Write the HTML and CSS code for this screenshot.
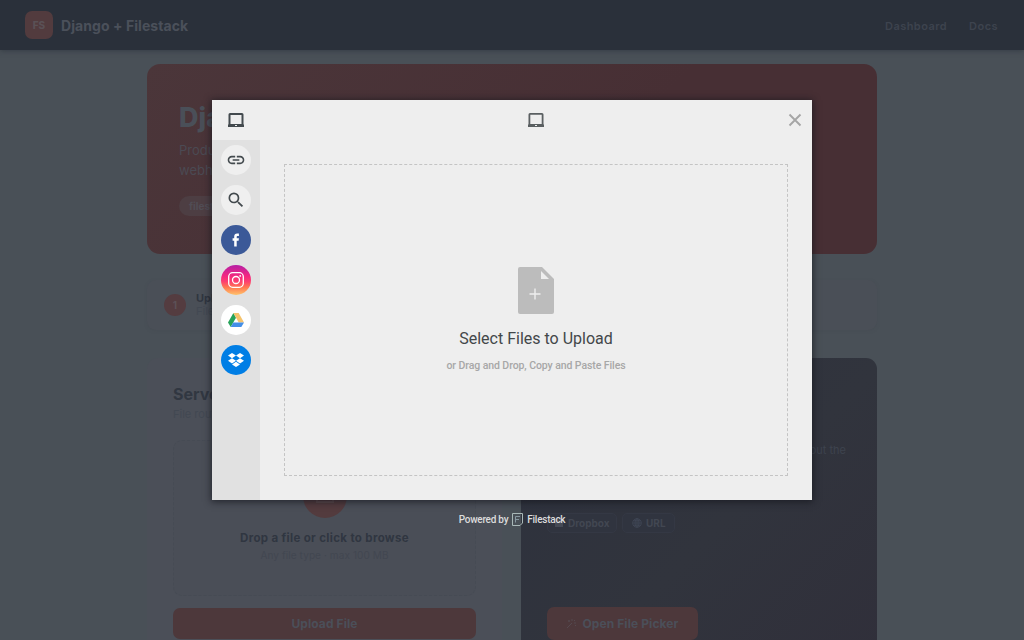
FILE: index.html
```
<!DOCTYPE html>
<html lang="en">
<head>
    <meta charset="UTF-8">
    <meta name="viewport" content="width=device-width, initial-scale=1.0">
    <title>Django + Filestack</title>
    <link rel="stylesheet" href="styles.css">
</head>
<body>
    <div class="navbar">
        <div class="brand"><span class="logo">FS</span><span class="brand-name">Django + Filestack</span></div>
        <div class="nav-links"><a>Dashboard</a><a>Docs</a></div>
    </div>

    <div class="page">
        <div class="hero">
            <h1>Django</h1>
            <p>Production<br>webhooks</p>
            <span class="tag">filestack</span>
        </div>

        <div class="steps">
            <span class="step-num">1</span>
            <div class="step-text"><b>Upload</b><span>File</span></div>
        </div>

        <div class="cards">
            <div class="card">
                <h2>Server</h2>
                <p class="sub">File routed</p>
                <div class="drop">
                    <div class="drop-icon">
                        <svg width="20" height="20" viewBox="0 0 20 20"><path d="M10 13V4M6 8l4-4 4 4M2 12v4h16v-4" fill="none" stroke="#5d494c" stroke-width="2"/></svg>
                    </div>
                    <b>Drop a file or click to browse</b>
                    <span>Any file type · max 100 MB</span>
                </div>
                <div class="btn upload-btn">Upload File</div>
            </div>

            <div class="card dark">
                <p class="dark-text">about the</p>
                <div class="chips">
                    <span class="chip chip-dropbox"><svg width="10" height="10" viewBox="0 0 10 10"><path d="M1 1h3l1 1h4v7H1z" fill="#454a55"/></svg><span>Dropbox</span></span>
                    <span class="chip chip-url"><svg width="10" height="10" viewBox="0 0 10 10" fill="none" stroke="#434b5a" stroke-width=".7"><circle cx="5" cy="5" r="4.300"/><ellipse cx="5" cy="5" rx="2" ry="4.300"/><path d="M.7 5h8.600M1.300 2.800h7.400M1.300 7.200h7.400M5 .7v8.600"/></svg><span>URL</span></span>
                </div>
                <div class="btn picker-btn">
                    <svg width="11" height="11" viewBox="0 0 11 11"><path d="M1 10l5-5M6 1v2M9 2L8 3M10 5H8M9 7l1 1M2 3h2M3 2v2" fill="none" stroke="#55494f" stroke-width="1"/></svg>
                    <span>Open File Picker</span>
                </div>
            </div>
        </div>
    </div>

    <!-- File picker -->
    <div class="overlay">
        <div class="modal">
            <div class="sidebar">
                <div class="source active">
                    <svg width="16" height="14" viewBox="0 0 16 14"><path fill="#434a4e" fill-rule="evenodd" d="M.5 11.500V1.500Q.5 0 2 0h12q1.500 0 1.500 1.500v10h.5V14H0v-2.500zM2.500 2v9h11V2zM7 12v1h2v-1z"/></svg>
                </div>
                <div class="source"><span class="round">
                    <svg width="20" height="20" viewBox="0 0 24 24"><path fill="#434a4e" d="M3.900 12c0-1.710 1.390-3.100 3.100-3.100h4V7H7c-2.760 0-5 2.240-5 5s2.240 5 5 5h4v-1.900H7c-1.710 0-3.100-1.390-3.100-3.100zM8 13h8v-2H8v2zm9-6h-4v1.900h4c1.710 0 3.100 1.390 3.100 3.100s-1.390 3.100-3.100 3.100h-4V17h4c2.760 0 5-2.240 5-5s-2.240-5-5-5z"/></svg>
                </span></div>
                <div class="source"><span class="round">
                    <svg width="20" height="20" viewBox="0 0 24 24"><path fill="#434a4e" d="M15.500 14h-.79l-.28-.27A6.470 6.470 0 0 0 16 9.500 6.500 6.500 0 1 0 9.500 16c1.610 0 3.090-.59 4.230-1.570l.27.28v.79l5 4.990L20.490 19zm-6 0C7.010 14 5 11.990 5 9.500S7.010 5 9.500 5 14 7.010 14 9.500 11.990 14 9.500 14z"/></svg>
                </span></div>
                <div class="source"><span class="round facebook">
                    <svg width="8" height="14" viewBox="0 0 8 14"><path fill="#fff" d="M2.200 13.500V7.700H.6V5.300h1.600V3.600C2.200 1.600 3.200.6 5.200.6h1.700v2.300H5.700c-.8 0-1 .3-1 1v1.400h2.200l-.3 2.400H4.700v5.800z"/></svg>
                </span></div>
                <div class="source"><span class="round instagram">
                    <svg width="16" height="16" viewBox="0 0 16 16" fill="none" stroke="#fff" stroke-width="1.300"><rect x=".7" y=".7" width="14.600" height="14.600" rx="4"/><circle cx="8" cy="8" r="3.500"/><circle cx="12.200" cy="3.900" r=".9" fill="#fff" stroke="none"/></svg>
                </span></div>
                <div class="source"><span class="round drive">
                    <svg width="16" height="14" viewBox="0 0 16 14"><path fill="#27a35a" d="M5.400 0L0 9.400 2.700 14 8 4.700z"/><path fill="#f5c36c" d="M5.400 0h5.300L16 9.400h-5.300z"/><path fill="#448fe8" d="M5.300 9.400H16L13.300 14H2.700z"/></svg>
                </span></div>
                <div class="source"><span class="round dropbox">
                    <svg width="16" height="15" viewBox="0 0 16 15"><path fill="#fff" d="M4 0l4 2.600-4 2.600L0 2.600zM12 0l4 2.600-4 2.600-4-2.600zM4 5.200l4 2.600-4 2.600-4-2.600zM12 5.200l4 2.600-4 2.600-4-2.600zM4 11.400l4-2.600 4 2.600L8 14z"/></svg>
                </span></div>
            </div>

            <div class="content">
                <div class="modal-head">
                    <svg width="16" height="14" viewBox="0 0 16 14"><path fill="#5a5f61" fill-rule="evenodd" d="M.5 11.500V1.500Q.5 0 2 0h12q1.500 0 1.500 1.500v10h.5V14H0v-2.500zM2.300 1.700V11h11.400V1.700zM7 12v1h2v-1z"/></svg>
                    <svg class="close" width="14" height="14" viewBox="0 0 14 14"><path d="M1.500 1.500l11 11m0-11l-11 11" stroke="#a5a5a5" stroke-width="1.900"/></svg>
                </div>
                <div class="select-zone">
                    <svg width="36" height="47" viewBox="0 0 36 47"><path fill="#bcbcbc" d="M2 0h22l12 12v33q0 2-2 2H2q-2 0-2-2V2q0-2 2-2z"/><path fill="#eee" d="M23 4v8h8z"/><path d="M11.500 27h11M17 21.500v11" stroke="#eee" stroke-width="1.400"/></svg>
                    <div class="select-title">Select Files to Upload</div>
                    <div class="select-sub">or Drag and Drop, Copy and Paste Files</div>
                </div>
            </div>
        </div>
        <div class="powered">
            <span>Powered by</span>
            <svg width="11" height="13" viewBox="0 0 11 13" fill="none" stroke="#a9b8b8"><path d="M8 12.500H.5V.5h10V10"/><path d="M3.500 9.500v-6H8M3.500 6.500H7" stroke="#8797a0"/><path d="M8 12.500L10.500 10"/></svg>
            <span>Filestack</span>
        </div>
    </div>
</body>
</html>
```
FILE: styles.css
```
* { box-sizing: border-box; }

body {
    margin: 0;
    height: 640px;
    overflow: hidden;
    background: #495057;
    font-family: Inter, "Open Sans", sans-serif;
}

h1, h2, p { margin: 0; }
svg { display: block; flex: none; }

.navbar {
    height: 50px;
    padding: 0 26px 0 25px;
    display: flex;
    justify-content: space-between;
    align-items: center;
    background: #2a303a;
    box-shadow: 0 1px 5px rgba(42,48,58,0.6);
}

.brand { display: flex; align-items: center; gap: 8px; }
.brand-name { color: #4b505a; font-size: 14px; font-weight: 700; letter-spacing: 0.07px; }

.logo {
    width: 28px;
    height: 28px;
    border-radius: 7px;
    background: #523b3e;
    color: #5a5156;
    font-size: 10px;
    font-weight: 800;
    line-height: 28px;
    text-align: center;
}

.nav-links {
    display: flex;
    gap: 22px;
    padding-top: 1px;
    color: #3d434e;
    font-size: 11px;
    font-weight: 600;
    letter-spacing: 0.45px;
}

.page { width: 730px; margin: 14px auto 0; }

.hero {
    height: 190px;
    padding: 37px 32px;
    border-radius: 13px;
    background: linear-gradient(135deg, #4b363a, #472f34 60%);
    color: #4b4a53;
}
.hero h1 { font-size: 27px; font-weight: 800; line-height: 34px; color: #4a4f58; }
.hero p { margin-top: 5px; font-size: 13px; line-height: 20px; }

.tag {
    display: inline-block;
    height: 20px;
    margin-top: 16px;
    padding: 0 10px;
    border-radius: 10px;
    background: #4d3e43;
    color: #514d55;
    font-size: 10px;
    font-weight: 700;
    line-height: 20px;
}

.steps {
    height: 50px;
    margin-top: 26px;
    padding: 0 17px;
    display: flex;
    align-items: center;
    gap: 10px;
    border-radius: 9px;
    background: #4a4f57;
    box-shadow: 0 1px 3px rgba(70,75,84,0.6);
}
.step-num {
    width: 22px;
    height: 22px;
    border-radius: 50%;
    background: #543c40;
    color: #5c5157;
    font-size: 10px;
    font-weight: 700;
    line-height: 22px;
    text-align: center;
}
.step-text { display: flex; flex-direction: column; font-size: 11px; line-height: 13px; color: #424852; }
.step-text b { color: #303640; }

.cards { display: flex; gap: 19px; margin-top: 28px; }

.card {
    width: 355px;
    height: 310px;
    padding: 26px;
    border-radius: 11px;
    background: #4b4f58;
}
.card h2 { font-size: 16px; font-weight: 700; line-height: 20px; color: #313741; }
.sub { margin-top: 1px; font-size: 11px; line-height: 18px; color: #424852; }

.drop {
    height: 156px;
    margin-top: 17px;
    padding-top: 33px;
    display: flex;
    flex-direction: column;
    align-items: center;
    border: 1px dashed #464b54;
    border-radius: 9px;
    background: #4a4e57;
    color: #424751;
    font-size: 10px;
}
.drop b { margin-top: 13px; color: #303641; font-size: 11.5px; line-height: 15px; letter-spacing: 0.34px; }
.drop span { line-height: 19px; letter-spacing: 0.1px; }
.drop-icon {
    width: 44px;
    height: 44px;
    display: flex;
    justify-content: center;
    align-items: center;
    border-radius: 50%;
    background: #533b3e;
}

.btn {
    display: flex;
    justify-content: center;
    align-items: center;
    border-radius: 7px;
    background: #4d383b;
    color: #4b4f59;
    font-size: 12px;
    font-weight: 700;
    letter-spacing: 0.1px;
}
.upload-btn { height: 31px; margin-top: 12px; }

.card.dark { width: 356px; background: linear-gradient(135deg, #2d313d, #31343d 55%, #302f3a); }
.dark-text { margin: 57px 5px 0 0; text-align: right; color: #3e434e; font-size: 11px; line-height: 18px; }

.chips { display: flex; gap: 5px; margin-top: 54px; }
.chip {
    height: 20px;
    display: flex;
    align-items: center;
    gap: 5px;
    border: 1px solid #343844;
    border-radius: 5px;
    background: #30343f;
    color: #424752;
    font-size: 10px;
    font-weight: 700;
}
.chip-dropbox { width: 70px; padding-left: 6px; gap: 4px; }
.chip-url { width: 53px; padding-left: 9px; gap: 4px; }

.picker-btn { width: 151px; height: 33px; margin-top: 74px; gap: 5px; }

/* Picker sits over the dimmed page */
.overlay {
    position: absolute;
    top: 0;
    left: 0;
    width: 1024px;
    height: 640px;
    padding-top: 100px;
    font-family: Roboto, sans-serif;
}

.modal {
    width: 600px;
    height: 400px;
    margin: 0 auto;
    display: flex;
    background: #eee;
    box-shadow: 0 1px 7px 1px rgba(20,22,28,0.7);
}

.sidebar { width: 48px; background: #e1e1e1; }
.source { height: 40px; display: flex; justify-content: center; align-items: center; }
.source.active { background: #eee; }

.round {
    width: 30px;
    height: 30px;
    display: flex;
    justify-content: center;
    align-items: center;
    border-radius: 50%;
    background: #efefef;
}
.facebook { background: #3b5998; }
.instagram { background: linear-gradient(#b51fa5, #f5277f 38%, #fc3f70 55%, #ff7a50 75%, #ffc36c); }
.drive { background: #fff; }
.dropbox { background: #007ee5; }

.content { flex: 1; padding: 0 24px; }
.modal-head {
    height: 40px;
    display: grid;
    grid-template-columns: 1fr 16px 1fr;
    align-items: center;
}
.modal-head svg:first-child { grid-column: 2; }
.close { justify-self: end; margin-right: -14px; }

.select-zone {
    height: 312px;
    margin-top: 24px;
    padding-top: 102px;
    display: flex;
    flex-direction: column;
    align-items: center;
    border: 1px dashed #c4c4c4;
}
.select-title { margin-top: 13px; color: #434749; font-size: 16px; line-height: 24px; }
.select-sub { margin-top: 7px; color: #a7a7a7; font-size: 10.5px; font-weight: 500; line-height: 16px; letter-spacing: -0.08px; }

.powered {
    height: 16px;
    margin-top: 11px;
    display: flex;
    justify-content: center;
    align-items: center;
    gap: 4px;
    color: #dcdcdc;
    font-size: 10px;
    font-weight: 500;
    letter-spacing: -0.25px;
}
```
